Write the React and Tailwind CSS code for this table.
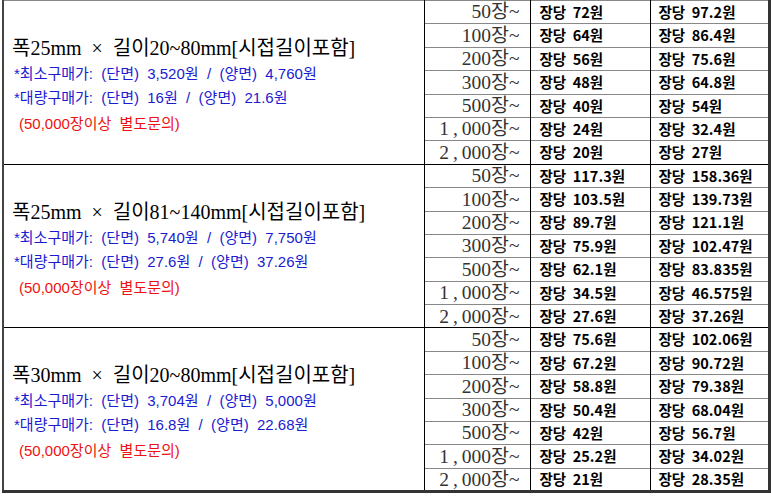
const qtys = ["50장~", "100장~", "200장~", "300장~", "500장~", "1,000장~", "2,000장~"];

const sections = [
  {
    title: "폭25mm × 길이20~80mm[시접길이포함]",
    min: "(단면)  3,520원  /  (양면)  4,760원",
    bulk: "(단면)  16원  /  (양면)  21.6원",
    prices: [["72", "97.2"], ["64", "86.4"], ["56", "75.6"], ["48", "64.8"], ["40", "54"], ["24", "32.4"], ["20", "27"]],
  },
  {
    title: "폭25mm × 길이81~140mm[시접길이포함]",
    min: "(단면)  5,740원  /  (양면)  7,750원",
    bulk: "(단면)  27.6원  /  (양면)  37.26원",
    prices: [["117.3", "158.36"], ["103.5", "139.73"], ["89.7", "121.1"], ["75.9", "102.47"], ["62.1", "83.835"], ["34.5", "46.575"], ["27.6", "37.26"]],
  },
  {
    title: "폭30mm × 길이20~80mm[시접길이포함]",
    min: "(단면)  3,704원  /  (양면)  5,000원",
    bulk: "(단면)  16.8원  /  (양면)  22.68원",
    prices: [["75.6", "102.06"], ["67.2", "90.72"], ["58.8", "79.38"], ["50.4", "68.04"], ["42", "56.7"], ["25.2", "34.02"], ["21", "28.35"]],
  },
];

const serif = "font-['Liberation_Serif','Noto_Sans_CJK_KR',serif]";
const sans = "font-['Liberation_Sans','Noto_Sans_CJK_KR',sans-serif]";
const bold = "font-['Noto_Sans_CJK_KR',sans-serif] font-bold";

// Batang-style wide comma in the quantity column
function Qty({ text }) {
  const parts = text.split(",");
  if (parts.length === 1) return text;
  return (
    <>
      {parts[0]}
      <span className="px-[4px]">,</span>
      {parts[1]}
    </>
  );
}

export default function App() {
  return (
    <div className="w-[771px] h-[496px] bg-white pl-[2px] pr-[2px] pt-0">
      <table className="w-[766px] border-collapse table-fixed border-l-2 border-r-[3px] border-b-[3px] border-t border-l-[#444] border-r-[#333] border-b-[#333] border-t-[#666]">
        <colgroup>
          <col className="w-[421px]" />
          <col className="w-[106px]" />
          <col className="w-[120px]" />
          <col className="w-[119px]" />
        </colgroup>
        <tbody>
          {sections.map((s, si) =>
            s.prices.map((p, i) => (
              <tr
                key={si + "-" + i}
                className={
                  "h-[23.4px] " +
                  (i === 0 && si > 0 ? "border-t border-t-black" : "border-t border-t-[#888]")
                }
              >
                {i === 0 && (
                  <td rowSpan={7} className="border-r border-r-black align-middle pl-[8px] pt-[8px]">
                    <div className={serif + " text-[20px] text-black leading-[28px] whitespace-pre"}>
                      {s.title.replace(" × ", "  ×  ")}
                    </div>
                    <div className={sans + " text-[15px] text-[#1b1bd0] leading-[24px] pl-[2px] whitespace-pre"}>
                      {"*최소구매가:  " + s.min}
                    </div>
                    <div className={sans + " text-[15px] text-[#1b1bd0] leading-[24px] pl-[2px] whitespace-pre"}>
                      {"*대량구매가:  " + s.bulk}
                    </div>
                    <div className={sans + " text-[15px] text-[#ee1111] leading-[28px] pl-[7px] whitespace-pre"}>
                      {"(50,000장이상  별도문의)"}
                    </div>
                  </td>
                )}
                <td className={serif + " border-r border-r-black text-right pr-[10px] text-[19.5px] text-[#333] leading-none whitespace-pre"}>
                  <Qty text={qtys[i]} />
                </td>
                <td className={bold + " border-r border-r-black pl-[9px] text-[14.5px] text-black leading-none whitespace-pre"}>
                  {"장당  " + p[0] + "원"}
                </td>
                <td className={bold + " pl-[8px] text-[14.5px] text-black leading-none whitespace-pre"}>
                  {"장당  " + p[1] + "원"}
                </td>
              </tr>
            ))
          )}
        </tbody>
      </table>
    </div>
  );
}
